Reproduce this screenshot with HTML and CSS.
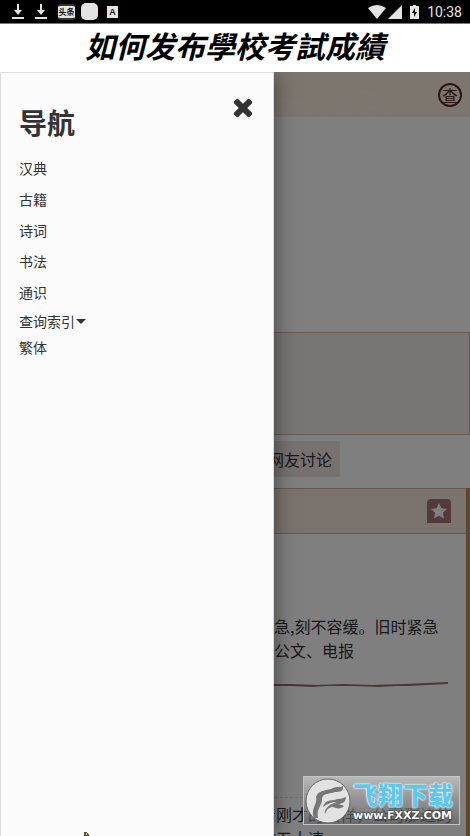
FILE: index.html
```html
<!DOCTYPE html>
<html lang="zh-CN">
<head>
<meta charset="utf-8">
<meta name="viewport" content="width=device-width, initial-scale=1">
<title>汉典</title>
<link rel="stylesheet" href="styles.css">
</head>
<body>
<div class="statusbar">
    <svg class="dl" viewBox="0 0 12 16"><path d="M5 0h2v6h3l-4 5-4-5h3z"/><path d="M0 13h12v2H0z"/></svg>
    <svg class="dl" viewBox="0 0 12 16"><path d="M5 0h2v6h3l-4 5-4-5h3z"/><path d="M0 13h12v2H0z"/></svg>
    <span class="news">头条</span>
    <span class="blank"></span>
    <span class="letter">A</span>
    <svg class="wifi" viewBox="0 0 18 14"><path d="M0 3Q9-3 18 3L9 14z"/></svg>
    <svg class="signal" viewBox="0 0 14 14"><path d="M14 0v14H0z"/></svg>
    <svg class="battery" viewBox="0 0 9 14"><path d="M3 0h3v1h3v13H0V1h3z"/><path class="bolt" d="M5 3L2 8h2v4l3-5H5z"/></svg>
    <span class="time">10:38</span>
</div>
<a class="banner" href="#">如何发布學校考試成績</a>

<div class="stage">
    <main class="page">
        <header class="top">
            <svg class="clouds" viewBox="0 0 118 28">
                <path d="M0 12Q8 8 14 13Q34 10 34 27M13 27Q10 19 18 21M54 27Q50 14 62 15Q66 4 78 8Q86-2 96 6Q108 5 108 16Q116 18 113 27"/>
                <path d="M64 27Q61 18 70 20Q75 24 69 27M94 27Q88 17 100 18Q106 24 99 27"/>
            </svg>
            <button class="search" aria-label="查">查</button>
        </header>
        <div class="adbox"></div>
        <nav class="tabs"><button>网友讨论</button></nav>
        <section class="card">
            <div class="card-head">
                <button class="fav" aria-label="收藏">
                    <svg viewBox="0 0 18 18"><path d="M9 1l2.400 5.200 5.600.7-4.100 3.900 1.100 5.700L9 13.700l-5 2.800 1.100-5.700L1 6.900l5.600-.7z"/></svg>
                </button>
            </div>
            <p class="meaning">急,刻不容缓。旧时紧急公文、电报</p>
            <svg class="brush" viewBox="0 0 200 6" preserveAspectRatio="none"><path d="M0 2L22 2 50 3 80 2 112 3 150 2 200 0V2L155 4 140 4 120 5 90 4 60 4 45 5 20 4 0 4z"/></svg>
            <p class="example">着刚才的模样，公司那边的的五大速</p>
        </section>
    </main>
    <div class="overlay"></div>

    <aside class="drawer">
        <button class="close" aria-label="关闭">
            <svg viewBox="0 0 1792 1792"><path d="M1490 1322q0 40-28 68l-136 136q-28 28-68 28t-68-28l-294-294-294 294q-28 28-68 28t-68-28l-136-136q-28-28-28-68t28-68l294-294-294-294q-28-28-28-68t28-68l136-136q28-28 68-28t68 28l294 294 294-294q28-28 68-28t68 28l136 136q28 28 28 68t-28 68l-294 294 294 294q28 28 28 68z"/></svg>
        </button>
        <h1>导航</h1>
        <ul>
            <li><a href="#">汉典</a></li>
            <li><a href="#">古籍</a></li>
            <li><a href="#">诗词</a></li>
            <li><a href="#">书法</a></li>
            <li><a href="#">通识</a></li>
            <li class="tight"><a class="dropdown" href="#">查询索引</a></li>
            <li class="tight"><a href="#">繁体</a></li>
        </ul>
        <svg class="pointer" viewBox="0 0 5 4"><path d="M0 0h3v1h1v1h1v2H0z"/><path class="tip" d="M2 1h1v2H2z"/></svg>
    </aside>

    <div class="mark">
        <svg viewBox="0 0 46 46">
            <circle cx="23" cy="23" r="22"/>
            <path d="M9 40C5 31 13 26 11 19C13 11 23 13 28 10C32 8 35 10 38 8C39 13 35 14 30 14C25 16 18 15 17 20C18 27 11 30 13 40z"/>
            <path d="M18 29C21 20 27 24 32 21C36 21 38 20 41 19C41 24 37 26 33 26C36 27 38 27 39 28C35 32 31 30 28 29C24 29 22 31 20 36C19 32 22 27 32 24C26 24 22 26 18 29z"/>
        </svg>
        <div class="mark-text">
            <strong>飞翔下载</strong>
            <span>www.FXXZ.COM</span>
        </div>
    </div>
</div>
</body>
</html>
```
FILE: styles.css
```css
* {
    box-sizing: border-box;
}

body {
    margin: 0;
    height: 100vh;
    display: flex;
    flex-direction: column;
    overflow: hidden;
    font: 16px/24px "Noto Sans CJK SC", sans-serif;
    color: #333;
}

button {
    border: 0;
    padding: 0;
    font: inherit;
    color: inherit;
    cursor: pointer;
}

a {
    color: inherit;
    text-decoration: none;
}

svg {
    display: block;
}

/* status bar */
.statusbar {
    display: flex;
    align-items: center;
    height: 24px;
    padding: 0 8px 0 12px;
    background: #000;
    border-bottom: 1px solid #777;
    color: #e4e4e4;
    fill: #e4e4e4;
}

.dl {
    width: 12px;
    height: 16px;
    margin-right: 11px;
}

.news {
    width: 17px;
    height: 16px;
    margin-right: 6px;
    border: solid #333;
    border-width: 2px 0;
    border-radius: 3px;
    background: #e4e4e4;
    color: #111;
    font-size: 8px;
    font-weight: bold;
    line-height: 12px;
    text-align: center;
}

.blank {
    width: 17px;
    height: 17px;
    margin-right: 9px;
    border-radius: 5px;
    background: #e4e4e4;
}

.letter {
    width: 11px;
    height: 12px;
    background: #e4e4e4;
    color: #111;
    font: bold 9px/12px "Liberation Sans", sans-serif;
    text-align: center;
}

.wifi {
    width: 18px;
    height: 14px;
    margin-left: auto;
}

.signal {
    width: 14px;
    height: 14px;
    margin: 0 8px 0 2px;
}

.battery {
    width: 9px;
    height: 14px;
    margin-right: 8px;
}

.bolt {
    fill: #000;
}

.time {
    font: 14px/22px Roboto, sans-serif;
}

.banner {
    height: 48px;
    padding-top: 2px;
    background: #fff;
    color: #000;
    font: italic bold 30px/44px "Liberation Serif", "Noto Sans CJK TC", serif;
    text-align: center;
}

/* page under the menu */
.stage {
    position: relative;
    flex: 1;
    min-height: 0;
    overflow: hidden;
}

.page {
    height: 100%;
    overflow: hidden;
    display: flex;
    flex-direction: column;
    background: #fff;
}

.top {
    flex: none;
    display: flex;
    align-items: center;
    justify-content: flex-end;
    height: 45px;
    padding-right: 8px;
    background: #faeddf;
}

.clouds {
    align-self: flex-end;
    width: 118px;
    height: 28px;
    margin-right: 46px;
    fill: none;
    stroke: #fdece4;
    stroke-width: 2;
}

.search {
    width: 24px;
    height: 24px;
    border: 2px solid #5a2e24;
    border-radius: 50%;
    background: none;
    color: #5a2e24;
    font-size: 16px;
    line-height: 18px;
}

.adbox {
    flex: none;
    height: 103px;
    margin-top: 215px;
    border: 1px solid #c9b7a8;
    background: #f0ece6;
}

.tabs {
    padding: 6px 0 11px 260px;
}

.tabs button {
    height: 36px;
    padding: 0 8px;
    border-radius: 2px;
    background: #eee2e0;
}

.card {
    flex: 1;
    border-right: 4px solid #c48a5a;
}

.card-head {
    display: flex;
    align-items: center;
    justify-content: flex-end;
    height: 46px;
    padding-right: 15px;
    border: solid #c9b09a;
    border-width: 1px 0;
    background: #f6e8dd;
}

.fav {
    display: flex;
    align-items: center;
    justify-content: center;
    width: 24px;
    height: 24px;
    border-radius: 4px 4px 0 0;
    background: #a87476;
}

.fav svg {
    width: 18px;
    height: 18px;
    fill: #fff;
}

.meaning {
    margin: 80px 24px 20px 274px;
}

.brush {
    width: 174px;
    height: 6px;
    margin-left: 274px;
    fill: #8a7472;
}

.example {
    margin: 109px 8px 0 260px;
    padding-top: 4px;
    border-top: 1px dashed #e0e0e0;
}

.overlay {
    position: absolute;
    inset: 0;
    background: rgba(0, 0, 0, .5);
}

/* side menu */
.drawer {
    position: absolute;
    top: 0;
    bottom: 0;
    left: 0;
    width: 274px;
    padding: 33px 18px;
    border: 1px solid #ddd;
    border-bottom: 0;
    background: #fbfbfb;
    box-shadow: 0 0 20px rgba(0, 0, 0, .5);
}

.close {
    position: absolute;
    top: 20px;
    right: 16px;
    background: none;
}

.close svg {
    width: 28px;
    height: 28px;
    fill: #333;
}

.drawer h1 {
    margin: 0 0 15px;
    font-size: 28px;
    line-height: 32px;
}

.drawer ul {
    margin: 0;
    padding: 0;
    list-style: none;
    font-size: 14px;
}

.drawer li {
    line-height: 31px;
}

.drawer .tight {
    line-height: 26px;
}

.dropdown::after {
    content: "";
    display: inline-block;
    margin-left: 1px;
    vertical-align: 3px;
    border: 5px solid transparent;
    border-top-color: #333;
    border-bottom: 0;
}

.pointer {
    position: absolute;
    bottom: 0;
    left: 83px;
    width: 5px;
    height: 4px;
    fill: #55533a;
}

.pointer .tip {
    fill: #e0d89a;
}

/* site mark */
.mark {
    position: absolute;
    right: 10px;
    bottom: 11px;
    display: flex;
    align-items: center;
    width: 157px;
    height: 49px;
    border: 1px solid #c4c4c4;
    background: linear-gradient(rgba(190, 190, 190, .9), rgba(90, 90, 90, .5));
}

.mark svg {
    flex: none;
    width: 46px;
    height: 46px;
    margin-left: 1px;
    fill: #777;
}

.mark circle {
    fill: #e2e2e2;
    stroke: #666;
}

.mark-text {
    display: flex;
    flex-direction: column;
    margin-left: 2px;
    white-space: nowrap;
}

.mark strong {
    color: #5cc8ee;
    font-size: 25px;
    font-weight: 900;
    line-height: 30px;
    text-shadow: 0 0 2px #fff, 0 0 2px #fff;
}

.mark span {
    color: #fff;
    font: bold 11px/14px "DejaVu Sans", sans-serif;
    text-shadow: 0 0 2px #333, 0 0 2px #333;
}
```
